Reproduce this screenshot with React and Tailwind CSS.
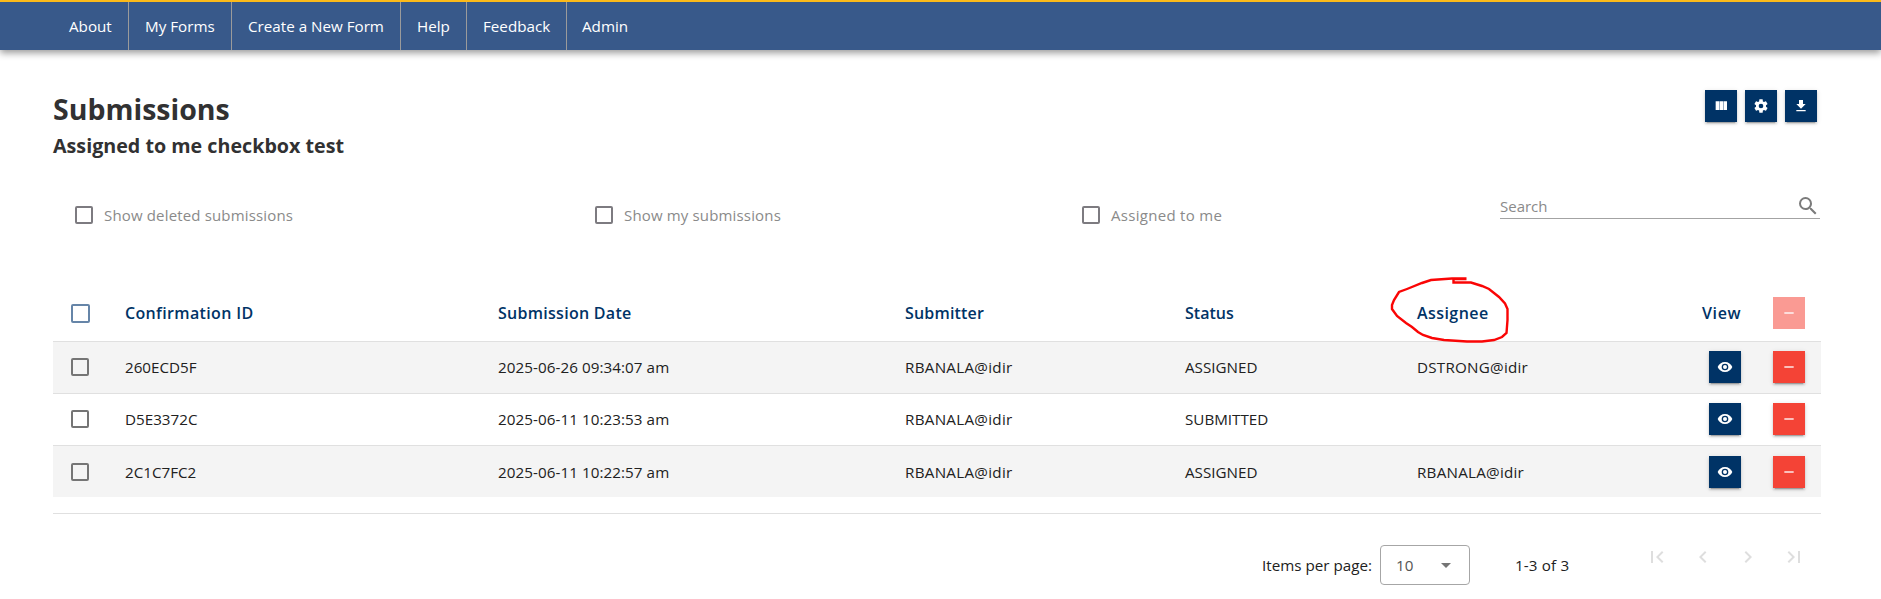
const ICONS = {
  columns: 'M15.7 5V18H21V5M4 18H9.3V5H4M9.9 18H15.1V5H9.9V18Z',
  cog: 'M12,15.5A3.5,3.5 0 0,1 8.5,12A3.5,3.5 0 0,1 12,8.5A3.5,3.5 0 0,1 15.5,12A3.5,3.5 0 0,1 12,15.5M19.43,12.97C19.47,12.65 19.5,12.33 19.5,12C19.5,11.67 19.47,11.34 19.43,11L21.54,9.37C21.73,9.22 21.78,8.95 21.66,8.73L19.66,5.27C19.54,5.05 19.27,4.96 19.05,5.05L16.56,6.05C16.04,5.66 15.5,5.32 14.87,5.07L14.5,2.42C14.46,2.18 14.25,2 14,2H10C9.75,2 9.54,2.18 9.5,2.42L9.13,5.07C8.5,5.32 7.96,5.66 7.44,6.05L4.95,5.05C4.73,4.96 4.46,5.05 4.34,5.27L2.34,8.73C2.21,8.95 2.27,9.22 2.46,9.37L4.57,11C4.53,11.34 4.5,11.67 4.5,12C4.5,12.33 4.53,12.65 4.57,12.97L2.46,14.63C2.27,14.78 2.21,15.05 2.34,15.27L4.34,18.73C4.46,18.95 4.73,19.03 4.95,18.95L7.44,17.94C7.96,18.34 8.5,18.68 9.13,18.93L9.5,21.58C9.54,21.82 9.75,22 10,22H14C14.25,22 14.46,21.82 14.5,21.58L14.87,18.93C15.5,18.67 16.04,18.34 16.56,17.94L19.05,18.95C19.27,19.03 19.54,18.95 19.66,18.73L21.66,15.27C21.78,15.05 21.73,14.78 21.54,14.63L19.43,12.97Z',
  download: 'M5,20H19V18H5M19,9H15V3H9V9H5L12,16L19,9Z',
  eye: 'M12,9A3,3 0 0,0 9,12A3,3 0 0,0 12,15A3,3 0 0,0 15,12A3,3 0 0,0 12,9M12,17A5,5 0 0,1 7,12A5,5 0 0,1 12,7A5,5 0 0,1 17,12A5,5 0 0,1 12,17M12,4.5C7,4.5 2.73,7.61 1,12C2.73,16.39 7,19.5 12,19.5C17,19.5 21.27,16.39 23,12C21.27,7.61 17,4.5 12,4.5Z',
  minus: 'M19,13H5V11H19V13Z',
  magnify: 'M9.5,3A6.5,6.5 0 0,1 16,9.5C16,11.11 15.41,12.59 14.44,13.73L14.71,14H15.5L20.5,19L19,20.5L14,15.5V14.71L13.73,14.44C12.59,15.41 11.11,16 9.5,16A6.5,6.5 0 0,1 3,9.5A6.5,6.5 0 0,1 9.5,3M9.5,5C7,5 5,7 5,9.5C5,12 7,14 9.5,14C12,14 14,12 14,9.5C14,7 12,5 9.5,5Z',
  first: 'M18.41,16.59L13.82,12L18.41,7.41L17,6L11,12L17,18L18.41,16.59M6,6H8V18H6V6Z',
  prev: 'M15.41,16.58L10.83,12L15.41,7.41L14,6L8,12L14,18L15.41,16.58Z',
  next: 'M8.59,16.58L13.17,12L8.59,7.41L10,6L16,12L10,18L8.59,16.58Z',
  last: 'M5.59,7.41L10.18,12L5.59,16.59L7,18L13,12L7,6L5.59,7.41M16,6H18V18H16V6Z',
  menuDown: 'M7,10L12,15L17,10H7Z',
};

function Icon({ name, className }) {
  return (
    <svg viewBox="0 0 24 24" fill="currentColor" className={className}>
      <path d={ICONS[name]} />
    </svg>
  );
}

const RAISED = 'shadow-[0_3px_1px_-2px_rgba(0,0,0,0.2),0_2px_2px_0_rgba(0,0,0,0.14),0_1px_5px_0_rgba(0,0,0,0.12)]';

function SquareButton({ icon, label, className }) {
  return (
    <button aria-label={label} className={`flex size-8 shrink-0 items-center justify-center text-white ${className}`}>
      <Icon name={icon} className="size-4" />
    </button>
  );
}

function Box({ className = 'size-[18px] border-[#757575]' }) {
  return <span className={`block shrink-0 rounded-[2px] border-2 ${className}`} />;
}

const NAV = [
  ['About', 'w-[129px] pl-[69px]'],
  ['My Forms', 'w-[103px] pl-4'],
  ['Create a New Form', 'w-[169px] pl-4'],
  ['Help', 'w-[66px] pl-4'],
  ['Feedback', 'w-[100px] pl-4'],
  ['Admin', 'w-[80px] pl-[15px]'],
];

const FILTERS = [
  ['Show deleted submissions', 'w-[519px] pl-[22px]'],
  ['Show my submissions', 'w-[488px] pl-[23px]'],
  ['Assigned to me', 'w-[440px] pl-[22px] tracking-[0.3px]'],
];

const ROWS = [
  ['260ECD5F', '2025-06-26 09:34:07 am', 'RBANALA@idir', 'ASSIGNED', 'DSTRONG@idir'],
  ['D5E3372C', '2025-06-11 10:23:53 am', 'RBANALA@idir', 'SUBMITTED', ''],
  ['2C1C7FC2', '2025-06-11 10:22:57 am', 'RBANALA@idir', 'ASSIGNED', 'RBANALA@idir'],
];

const GRID = 'grid grid-cols-[72px_373px_407px_280px_232px_292px_112px] items-center';

export default function App() {
  return (
    <div className="h-[599px] w-[1881px] overflow-hidden bg-white font-['Open_Sans',sans-serif] text-[15.2px] text-[#212121]">
      <nav className="flex h-[50px] border-t-2 border-[#fcba19] bg-[#38598a] text-white shadow-[0_3px_7px_0_rgba(0,0,0,0.4)]">
        {NAV.map(([label, cls], i) => (
          <a key={label} className={`flex items-center whitespace-nowrap ${cls} ${i < 5 ? 'border-r border-[#9b9b9b]' : ''}`}>
            {label}
          </a>
        ))}
      </nav>

      <main className="ml-[53px] w-[1768px] pt-10">
        <header className="flex h-[104px] justify-between">
          <div className="text-[#313132]">
            <h1 className="text-[28.5px] leading-[38px] font-bold">Submissions</h1>
            <h2 className="text-[19.7px] leading-[36px] font-bold">Assigned to me checkbox test</h2>
          </div>
          <div className="flex gap-2 pr-1">
            <SquareButton icon="columns" label="Columns" className={`bg-[#003366] ${RAISED}`} />
            <SquareButton icon="cog" label="Manage" className={`bg-[#003366] ${RAISED}`} />
            <SquareButton icon="download" label="Export" className={`bg-[#003366] ${RAISED}`} />
          </div>
        </header>

        <section className="flex h-[91px] text-[15px] tracking-[0.16px] text-[#8a8a8a]">
          {FILTERS.map(([label, cls]) => (
            <label key={label} className={`flex h-[42px] shrink-0 items-center gap-[11px] ${cls}`}>
              <Box className="size-[18px] border-[#7d7b80]" />
              {label}
            </label>
          ))}
          <div className="flex h-[25px] w-[320px] shrink-0 items-center justify-between border-b border-[#a3a3a3] tracking-normal">
            <span className="pt-px">Search</span>
            <Icon name="magnify" className="size-6 text-[#7b7b7b]" />
          </div>
        </section>

        <section>
          <div className={`${GRID} h-[57px] border-b border-[#e0e0e0] text-base font-semibold text-[#003366]`}>
            <span className="pl-[18px]">
              <Box className="size-[19px] border-[#6685a8]" />
            </span>
            <span className="tracking-[0.35px]">Confirmation ID</span>
            <span className="tracking-[0.28px]">Submission Date</span>
            <span className="tracking-[0.18px]">Submitter</span>
            <span>Status</span>
            <div className="relative">
              <span className="tracking-[0.43px]">Assignee</span>
              <svg className="absolute top-[-29px] left-[-32px] h-[72px] w-[126px]" fill="none" stroke="#fa0505" strokeWidth="2.4" viewBox="0 0 126 72">
                <path d="M81.5 7H68.5V10.5H86L97 14L104 17L114 25L120 31.5L122.5 37V48L121.5 61L117 65L109 68L97 69.5H82L59 68L47 66L38 63L33 60L27 55L21 51L12 44L7 37V33L9 28L14 20L22 17L37 11L46 8L67 6.5H81.5" />
              </svg>
            </div>
            <span className="flex items-center justify-between pr-4">
              <span className="-ml-[7px] tracking-[0.6px]">View</span>
              <SquareButton icon="minus" label="Delete selected" className="bg-[#fa9a93]" />
            </span>
          </div>

          {ROWS.map((row, i) => (
            <div
              key={row[0]}
              className={`${GRID} ${i % 2 === 0 ? 'bg-[#f4f4f4]' : 'bg-white'} ${i < 2 ? 'h-[52px] border-b border-[#e0e0e0] pb-px' : 'h-[51px] pt-px'}`}
            >
              <span className="pl-[18px]">
                <Box />
              </span>
              <span>{row[0]}</span>
              <span className="tracking-[0.07px]">{row[1]}</span>
              <span className="tracking-[0.28px]">{row[2]}</span>
              <span>{row[3]}</span>
              <span className="tracking-[0.24px]">{row[4]}</span>
              <span className="flex justify-between pr-4">
                <SquareButton icon="eye" label="View" className={`bg-[#003366] ${RAISED}`} />
                <SquareButton icon="minus" label="Delete" className={`bg-[#f44336] ${RAISED}`} />
              </span>
            </div>
          ))}
        </section>

        <footer className="mt-4 flex h-[86px] items-start border-t border-[#e0e0e0]">
          <span className="mt-[41px] ml-[1209px] w-[118px] leading-[20px]">Items per page:</span>
          <div className="mt-[31px] flex h-10 w-[90px] items-center justify-between rounded-[4px] border border-[#a6a6a6] pr-[11px] pl-[15px] text-[#545454]">
            10
            <Icon name="menuDown" className="size-6 text-[#757575]" />
          </div>
          <span className="mt-[41px] ml-[45px] w-[130px] leading-[20px] tracking-[0.15px]">1-3 of 3</span>
          <div className="mt-[31px] flex gap-[21.7px] text-[#dedede]">
            <Icon name="first" className="size-6" />
            <Icon name="prev" className="size-6" />
            <Icon name="next" className="size-6" />
            <Icon name="last" className="size-6" />
          </div>
        </footer>
      </main>
    </div>
  );
}
